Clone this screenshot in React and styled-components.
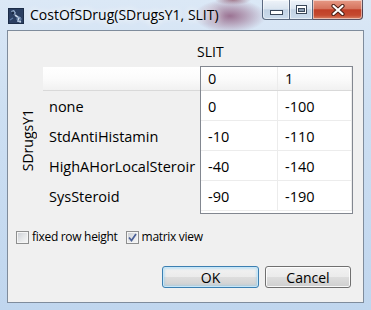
import React from 'react';
import styled, { createGlobalStyle } from 'styled-components';

const GlobalStyle = createGlobalStyle`
  html, body {
    margin: 0;
    padding: 0;
    background: #fff;
  }
  body {
    font-family: 'Open Sans', 'Noto Sans', sans-serif;
  }
`;

const FONT = `'Open Sans', 'Noto Sans', sans-serif`;

const Window = styled.div`
  width: 371px;
  height: 310px;
  box-sizing: border-box;
  display: flex;
  flex-direction: column;
  overflow: hidden;
  background:
    radial-gradient(ellipse 36px 17px at 230px 16px, rgba(150, 105, 138, 0.92) 0%, rgba(165, 130, 158, 0.65) 45%, rgba(190, 170, 195, 0) 100%),
    radial-gradient(ellipse 18px 5px at 233px 0px, rgba(125, 50, 70, 0.6), rgba(125, 50, 70, 0) 100%),
    linear-gradient(180deg, #dbe8f6 0%, #cddff2 35%, #c0d6ee 100%);
`;

const TitleBar = styled.div`
  height: 30px;
  flex-shrink: 0;
  display: flex;
  align-items: flex-start;
  padding-left: 8px;
`;

const AppIcon = styled.svg`
  margin-top: 8px;
  flex-shrink: 0;
`;

const Caption = styled.div`
  margin: 6px 0 0 6px;
  font-family: ${FONT};
  font-size: 14px;
  line-height: 18px;
  color: #000;
  white-space: nowrap;
  text-shadow: 0 0 6px #fff, 0 0 10px rgba(255, 255, 255, 0.8);
`;

const CaptionButtons = styled.div`
  margin-left: auto;
  margin-right: 8px;
  height: 20px;
  display: flex;
`;

const CaptionButton = styled.div`
  width: ${p => p.$w}px;
  box-sizing: border-box;
  display: flex;
  align-items: ${p => (p.$low ? 'flex-end' : 'center')};
  justify-content: center;
  padding-bottom: ${p => (p.$low ? 4 : 0)}px;
  border: 1px solid rgba(45, 62, 90, 0.75);
  border-top: none;
  border-left-width: ${p => (p.$first ? 1 : 0)}px;
  border-radius: ${p => (p.$first ? '0 0 0 4px' : p.$last ? '0 0 4px 0' : '0')};
  box-shadow: inset 0 0 0 1px rgba(255, 255, 255, 0.5);
  background: ${p =>
    p.$close
      ? 'linear-gradient(180deg, #e69a86 0%, #d6745e 45%, #c13f27 52%, #c54a30 80%, #d98266 100%)'
      : 'linear-gradient(180deg, #eef3f9 0%, #dbe5f0 45%, #c2d2e4 52%, #cbdbec 100%)'};
`;

const Client = styled.div`
  flex: 1;
  margin: 0 7px 7px 7px;
  border: 1px solid #7f8c9c;
  background: #f0f0f0;
  display: flex;
  flex-direction: column;
  font-family: ${FONT};
  font-size: 14px;
  color: #000;
`;

const AxisTitle = styled.div`
  margin-top: 12px;
  padding-left: 189px;
  line-height: 18px;
  height: 18px;
`;

const MatrixRow = styled.div`
  margin-top: 5px;
  display: flex;
`;

const SideLabel = styled.div`
  width: 35px;
  display: flex;
  align-items: center;
  justify-content: center;
  padding-left: 4px;
  box-sizing: border-box;
`;

const Vertical = styled.span`
  writing-mode: vertical-rl;
  transform: rotate(180deg);
  line-height: 16px;
  white-space: nowrap;
`;

const RowHeaders = styled.div`
  width: 157px;
  padding-top: 1px;
`;

const HeadBand = styled.div`
  height: 24px;
  box-sizing: border-box;
  border-bottom: 1px solid #d9d9d9;
  background: linear-gradient(180deg, #ffffff 0%, #fbfbfb 50%, #f1f1f1 100%);
`;

const RowLabel = styled.div`
  width: 154px;
  height: 30px;
  box-sizing: border-box;
  padding: 2px 0 0 6px;
  line-height: 28px;
  font-size: 14.5px;
  white-space: nowrap;
  overflow: hidden;
`;

const DataBox = styled.div`
  width: 153px;
  height: 148px;
  box-sizing: border-box;
  border: 1px solid #828790;
  background: #fff;
  overflow: hidden;
`;

const DataRow = styled.div`
  display: flex;
  height: ${p => (p.$head ? 24 : 30)}px;
  box-sizing: border-box;
  border-bottom: 1px solid ${p => (p.$head ? '#d9d9d9' : '#ececec')};
  background: ${p =>
    p.$head ? 'linear-gradient(180deg, #ffffff 0%, #fbfbfb 50%, #f1f1f1 100%)' : '#fff'};
`;

const Cell = styled.div`
  width: ${p => p.$w}px;
  box-sizing: border-box;
  border-right: 1px solid #ececec;
  padding: ${p => (p.$head ? '0' : '2px')} 0 0 7px;
  font-size: 14.5px;
  display: flex;
  align-items: center;
  white-space: nowrap;
`;

const OptionsRow = styled.div`
  margin-top: 14px;
  height: 18px;
  padding-left: 8px;
  display: flex;
  align-items: center;
  font-size: 12px;
  letter-spacing: -0.3px;
`;

const Option = styled.label`
  display: flex;
  align-items: center;
  gap: 3px;
  margin-right: 8px;
  line-height: 18px;
  white-space: nowrap;
`;

const Box = styled.span`
  width: 13px;
  height: 13px;
  box-sizing: border-box;
  border: 1px solid #8e8f8f;
  box-shadow: inset 0 0 0 1px #f5f5f5;
  background: linear-gradient(135deg, #c9ccd2 0%, #e4e6e8 50%, #f8f8f8 100%);
  display: flex;
  align-items: center;
  justify-content: center;
`;

const ButtonRow = styled.div`
  margin-top: auto;
  padding: 0 12px 14px 0;
  display: flex;
  justify-content: flex-end;
  gap: 6px;
`;

const Button = styled.div`
  width: ${p => p.$w}px;
  height: 22px;
  box-sizing: border-box;
  border: 1px solid ${p => (p.$default ? '#3c7fb1' : '#707070')};
  border-radius: 3px;
  display: flex;
  align-items: center;
  justify-content: center;
  box-shadow: ${p =>
    p.$default
      ? 'inset 0 0 0 1px #c6e6f8, inset 0 0 2px 2px rgba(120, 200, 240, 0.35)'
      : 'inset 0 0 0 1px rgba(255, 255, 255, 0.85)'};
  background: linear-gradient(180deg, #f2f2f2 0%, #ebebeb 50%, #dddddd 51%, #cfcfcf 100%);
`;

const CheckBox = ({ checked, label }) => (
  <Option>
    <Box>
      {checked && (
        <svg width="9" height="9" viewBox="0 0 9 9">
          <path d="M1 4.5 L3.5 7.5 L8 1" fill="none" stroke="#4a5f97" strokeWidth="1.7" />
        </svg>
      )}
    </Box>
    {label}
  </Option>
);

const rows = [
  { name: 'none', values: ['0', '-100'] },
  { name: 'StdAntiHistamin', values: ['-10', '-110'] },
  { name: 'HighAHorLocalSteroir', values: ['-40', '-140'] },
  { name: 'SysSteroid', values: ['-90', '-190'] },
];

const widths = [77, 74];

const App = () => {
  return (
    <>
      <GlobalStyle />
      <Window>
        <TitleBar>
          <AppIcon width="16" height="16" viewBox="0 0 16 16">
            <rect x="0" y="0" width="16" height="16" fill="#1c2c47" />
            <rect x="1" y="1" width="14" height="14" fill="#2b3f62" />
            <path d="M3 3 L6 2 L8 5 L6 7 Z" fill="#9fb7d6" />
            <path d="M7 7 L11 10 L10 13 L13 14" fill="none" stroke="#c8d6e8" strokeWidth="1.6" />
            <circle cx="5" cy="5" r="1.4" fill="#1c2c47" />
            <circle cx="11" cy="11" r="2" fill="none" stroke="#7f9bc0" strokeWidth="1" />
            <path d="M2 12 L5 10" stroke="#5d7aa3" strokeWidth="1.2" />
          </AppIcon>
          <Caption>CostOfSDrug(SDrugsY1, SLIT)</Caption>
          <CaptionButtons>
            <CaptionButton $w={28} $first $low>
              <svg width="13" height="5" viewBox="0 0 13 5">
                <rect x="0.5" y="0.5" width="12" height="4" fill="#fff" stroke="#3a4759" />
              </svg>
            </CaptionButton>
            <CaptionButton $w={23}>
              <svg width="11" height="9" viewBox="0 0 11 9">
                <rect x="0.5" y="0.5" width="10" height="8" fill="#fff" stroke="#3a4759" />
                <rect x="2.5" y="3.5" width="6" height="3" fill="#8c9db2" stroke="#3a4759" />
              </svg>
            </CaptionButton>
            <CaptionButton $w={50} $close $last>
              <svg width="14" height="12" viewBox="0 0 14 12">
                <path d="M2.5 2 L11.5 10 M11.5 2 L2.5 10" stroke="#4a1e16" strokeWidth="4.2" strokeLinecap="round" />
                <path d="M2.5 2 L11.5 10 M11.5 2 L2.5 10" stroke="#fff" strokeWidth="2.2" strokeLinecap="round" />
              </svg>
            </CaptionButton>
          </CaptionButtons>
        </TitleBar>

        <Client>
          <AxisTitle>SLIT</AxisTitle>
          <MatrixRow>
            <SideLabel>
              <Vertical>SDrugsY1</Vertical>
            </SideLabel>
            <RowHeaders>
              <HeadBand />
              {rows.map(row => (
                <RowLabel key={row.name}>{row.name}</RowLabel>
              ))}
            </RowHeaders>
            <DataBox>
              <DataRow $head>
                {['0', '1'].map((h, i) => (
                  <Cell key={h} $head $w={widths[i]}>{h}</Cell>
                ))}
              </DataRow>
              {rows.map(row => (
                <DataRow key={row.name}>
                  {row.values.map((v, i) => (
                    <Cell key={i} $w={widths[i]}>{v}</Cell>
                  ))}
                </DataRow>
              ))}
            </DataBox>
          </MatrixRow>

          <OptionsRow>
            <CheckBox label="fixed row height" />
            <CheckBox checked label="matrix view" />
          </OptionsRow>

          <ButtonRow>
            <Button $w={97} $default>OK</Button>
            <Button $w={86}>Cancel</Button>
          </ButtonRow>
        </Client>
      </Window>
    </>
  );
};

export default App;
